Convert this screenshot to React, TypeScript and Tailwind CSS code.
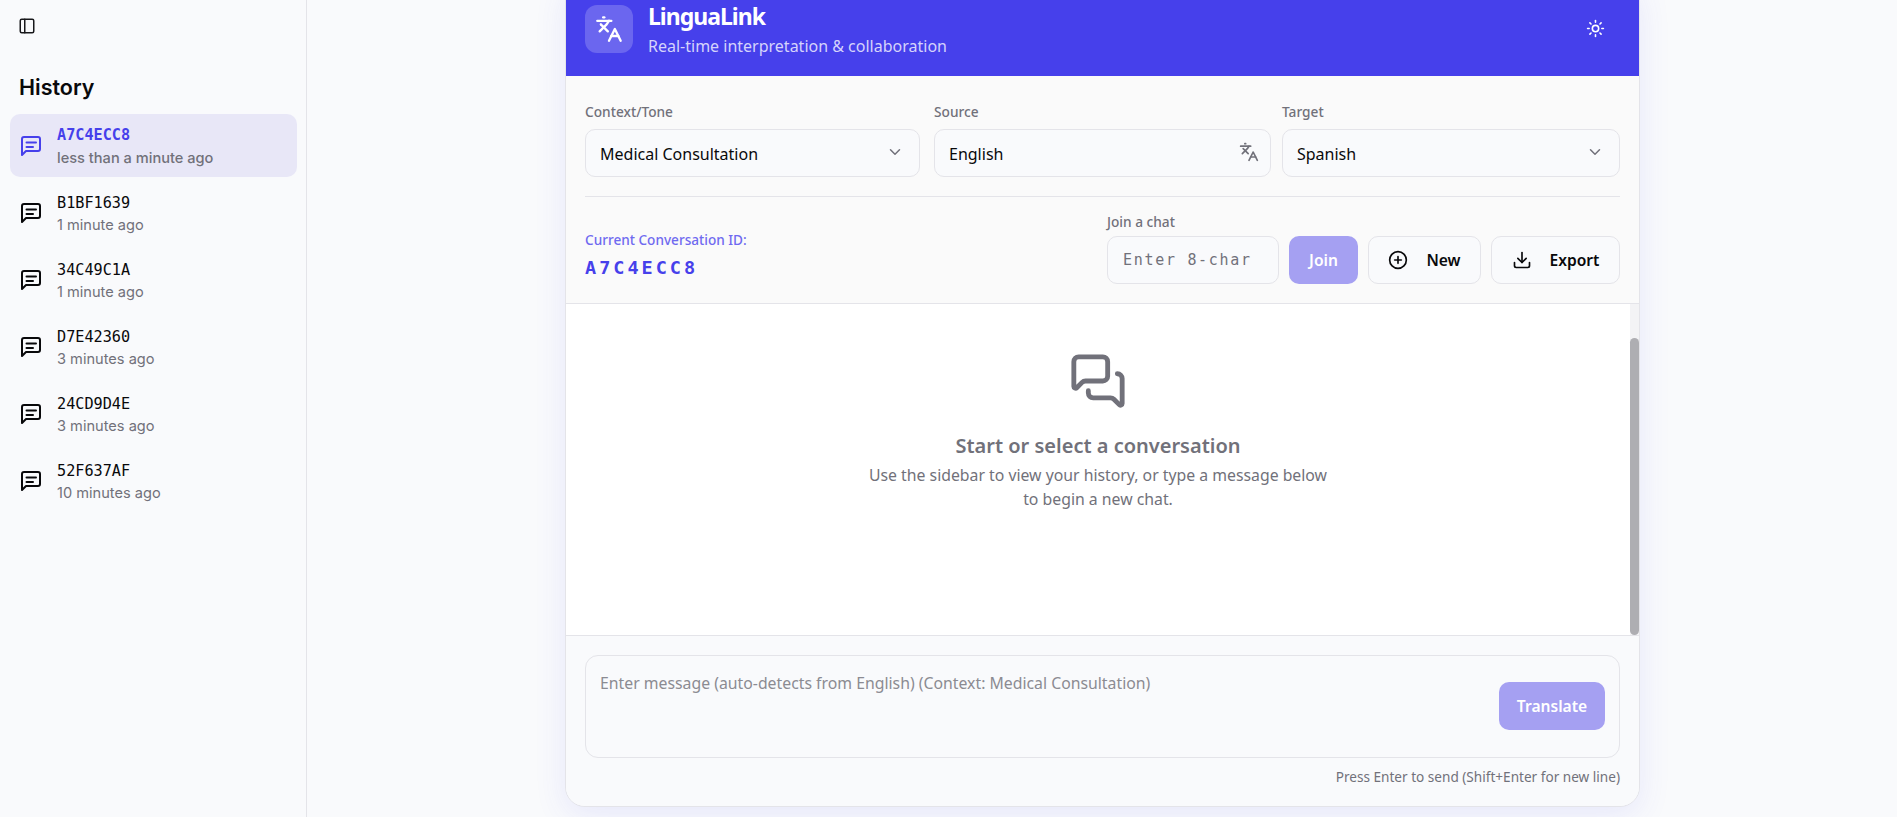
import React from 'react';
import {
  ChevronDown,
  CirclePlus,
  Download,
  Languages,
  MessagesSquare,
  PanelLeft,
  Sun,
} from 'lucide-react';

const chats = [
  { id: 'A7C4ECC8', time: 'less than a minute ago', active: true },
  { id: 'B1BF1639', time: '1 minute ago' },
  { id: '34C49C1A', time: '1 minute ago' },
  { id: 'D7E42360', time: '3 minutes ago' },
  { id: '24CD9D4E', time: '3 minutes ago' },
  { id: '52F637AF', time: '10 minutes ago' },
];

// lucide's current message-square-text has three lines, the picture has two
const ChatIcon = ({ className }: { className: string }) => (
  <svg viewBox="0 0 24 24" fill="none" stroke="currentColor" strokeWidth={2} strokeLinecap="round" strokeLinejoin="round" className={className}>
    <path d="M21 15a2 2 0 0 1-2 2H7l-4 4V5a2 2 0 0 1 2-2h14a2 2 0 0 1 2 2z" />
    <path d="M7.5 8.5h9.5" />
    <path d="M7.5 13h6.5" />
  </svg>
);

const Sidebar = () => (
  <aside className="w-[307px] shrink-0 border-r border-[#e4e4e9] bg-[#f9fafc] font-['Inter',sans-serif]">
    <div className="flex h-[52px] items-center pl-[18px]">
      <PanelLeft className="h-[18px] w-[18px] text-[#18181b]" />
    </div>
    <h2 className="mt-[21px] pl-[19px] text-[21.5px] leading-[28px] font-semibold text-[#09090b]">History</h2>
    <ul className="mt-[13px] flex flex-col gap-1 pr-[9px] pl-[10px]">
      {chats.map((chat) => (
        <li
          key={chat.id}
          className={`flex h-[63px] items-center gap-[14px] rounded-[10px] pl-[9px] ${chat.active ? 'bg-[#e8e7f7]' : ''}`}
        >
          <ChatIcon className={`h-[24px] w-[24px] ${chat.active ? 'text-[#4640eb]' : 'text-[#09090b]'}`} />
          <div className={chat.active ? 'pt-[2px]' : 'pt-[3px]'}>
            <p className={`font-['DejaVu_Sans_Mono',monospace] text-[15.2px] ${chat.active ? 'leading-[23px] font-bold text-[#4640eb]' : 'leading-[22px] text-[#09090b]'}`}>
              {chat.id}
            </p>
            <p className={`text-[14.6px] leading-[23px] text-[#71717a] ${chat.active ? 'font-medium' : ''}`}>{chat.time}</p>
          </div>
        </li>
      ))}
    </ul>
  </aside>
);

const FieldLabel = ({ children }: { children: React.ReactNode }) => (
  <p className="mb-2 text-[13.7px] leading-[18px] font-medium text-[#71717a]">{children}</p>
);

const fieldBox = 'flex h-[48px] items-center justify-between rounded-[10px] border border-[#e4e4e9] bg-[#f9fafc] pt-[2px] pr-[15px] pl-[14px] text-[16px] text-[#09090b]';

const Controls = () => (
  <div className="bg-[#fafafa] px-[19px]">
    <div className="flex border-b border-[#e4e4e9] pt-[27px] pb-[19px]">
      <div className="mr-[14px] w-[335px]">
        <FieldLabel>Context/Tone</FieldLabel>
        <div className={fieldBox}>
          Medical Consultation
          <ChevronDown className="mb-[4px] h-[18px] w-[18px] text-[#71717a]" />
        </div>
      </div>
      <div className="mr-[11px] w-[337px]">
        <FieldLabel>Source</FieldLabel>
        <div className={`${fieldBox} !pr-[11px]`}>
          English
          <Languages className="mb-[4px] h-[20px] w-[20px] text-[#71717a]" />
        </div>
      </div>
      <div className="flex-1">
        <FieldLabel>Target</FieldLabel>
        <div className={fieldBox}>
          Spanish
          <ChevronDown className="mb-[4px] h-[18px] w-[18px] text-[#71717a]" />
        </div>
      </div>
    </div>
    <div className="flex items-end justify-between pt-[16px] pb-[19px]">
      <div className="mb-[4px]">
        <p className="text-[13.6px] leading-[18px] font-medium text-[#6f6af0]">Current Conversation ID:</p>
        <p className="mt-[7px] font-['DejaVu_Sans_Mono',monospace] text-[18.5px] leading-[24px] font-bold tracking-[3px] text-[#4640eb]">A7C4ECC8</p>
      </div>
      <div className="flex items-end gap-[10px]">
        <div>
          <p className="mb-[5px] text-[13.7px] leading-[18px] font-medium text-[#71717a]">Join a chat</p>
          <input
            placeholder="Enter 8-char"
            className="h-[48px] w-[172px] rounded-[10px] border border-[#e4e4e9] bg-[#f9fafc] px-[15px] font-['DejaVu_Sans_Mono',monospace] text-[15px] tracking-[1.7px] placeholder:text-[#71717a]"
          />
        </div>
        <button className="h-[48px] w-[69px] rounded-[10px] bg-[#a5a0f2] pt-[2px] text-[15.6px] font-semibold text-white">Join</button>
        <button className="flex h-[48px] w-[113px] items-center justify-center gap-[18px] rounded-[10px] border border-[#e4e4e9] bg-[#f9fafc] text-[15.6px] font-semibold text-[#09090b]">
          <CirclePlus className="h-[20px] w-[20px]" />
          <span className="pt-[2px]">New</span>
        </button>
        <button className="flex h-[48px] w-[129px] items-center justify-center gap-[18px] rounded-[10px] border border-[#e4e4e9] bg-[#f9fafc] text-[15.6px] font-semibold text-[#09090b]">
          <Download className="h-[20px] w-[20px]" />
          <span className="pt-[2px]">Export</span>
        </button>
      </div>
    </div>
  </div>
);

const EmptyState = () => (
  <div className="flex h-[333px] border-y border-[#e4e4e9] bg-white">
    <div className="flex flex-1 flex-col items-center pt-[48px] text-[#71717a]">
      <MessagesSquare className="h-[58px] w-[58px]" />
      <h3 className="mt-[22px] text-[20px] leading-[28px] font-semibold">Start or select a conversation</h3>
      <p className="mt-[3px] w-[470px] text-center text-[15.8px] leading-[24px]">
        Use the sidebar to view your history, or type a message below to begin a new chat.
      </p>
    </div>
    <div className="flex w-[9px] flex-col bg-[#f3f3f5] pt-[34px]">
      <div className="flex-1 rounded-full bg-[#aeaeb2]" />
    </div>
  </div>
);

const Composer = () => (
  <div className="bg-[#f9fafc] px-[19px] pt-[19px] pb-[20px]">
    <div className="flex h-[103px] items-center rounded-[13px] border border-[#e4e4e9] bg-[#f9fafc] pr-[14px]">
      <textarea
        rows={3}
        placeholder="Enter message (auto-detects from English) (Context: Medical Consultation)"
        className="h-full flex-1 resize-none bg-transparent px-[14px] pt-[15px] text-[15.8px] leading-[24px] placeholder:text-[#8b8b92]"
      />
      <button className="mb-[1px] h-[48px] w-[106px] rounded-[10px] bg-[#a5a0f2] pt-[2px] text-[15.6px] font-semibold text-white">Translate</button>
    </div>
    <p className="mt-[10px] text-right text-[13.6px] leading-[18px] text-[#71717a]">Press Enter to send (Shift+Enter for new line)</p>
  </div>
);

export default function App() {
  return (
    <div className="flex h-screen overflow-hidden bg-[#f9fafc] font-['Noto_Sans',sans-serif]">
      <Sidebar />
      <main className="flex-1 overflow-hidden pl-[1px]">
        <div className="mx-auto -mt-[20px] w-[1075px] overflow-hidden rounded-[20px] border border-[#e4e4e9] bg-[#f9fafc] shadow-[0_8px_32px_rgba(70,64,235,0.1)]">
          <header className="flex h-[95px] items-center justify-between bg-[#4640eb] pr-[34px] pl-[19px] text-white">
            <div className="flex items-center gap-[15px]">
              <div className="flex h-[48px] w-[48px] items-center justify-center rounded-[12px] bg-white/20">
                <Languages className="h-[28px] w-[28px]" />
              </div>
              <div className="pt-[5px]">
                <h1 className="text-[23px] leading-[28px] font-bold tracking-[-1px]">LinguaLink</h1>
                <p className="mt-[2px] text-[16px] leading-[28px] text-[#d5d3fb]">Real-time interpretation &amp; collaboration</p>
              </div>
            </div>
            <Sun className="h-[19px] w-[19px]" />
          </header>
          <Controls />
          <EmptyState />
          <Composer />
        </div>
      </main>
    </div>
  );
}
